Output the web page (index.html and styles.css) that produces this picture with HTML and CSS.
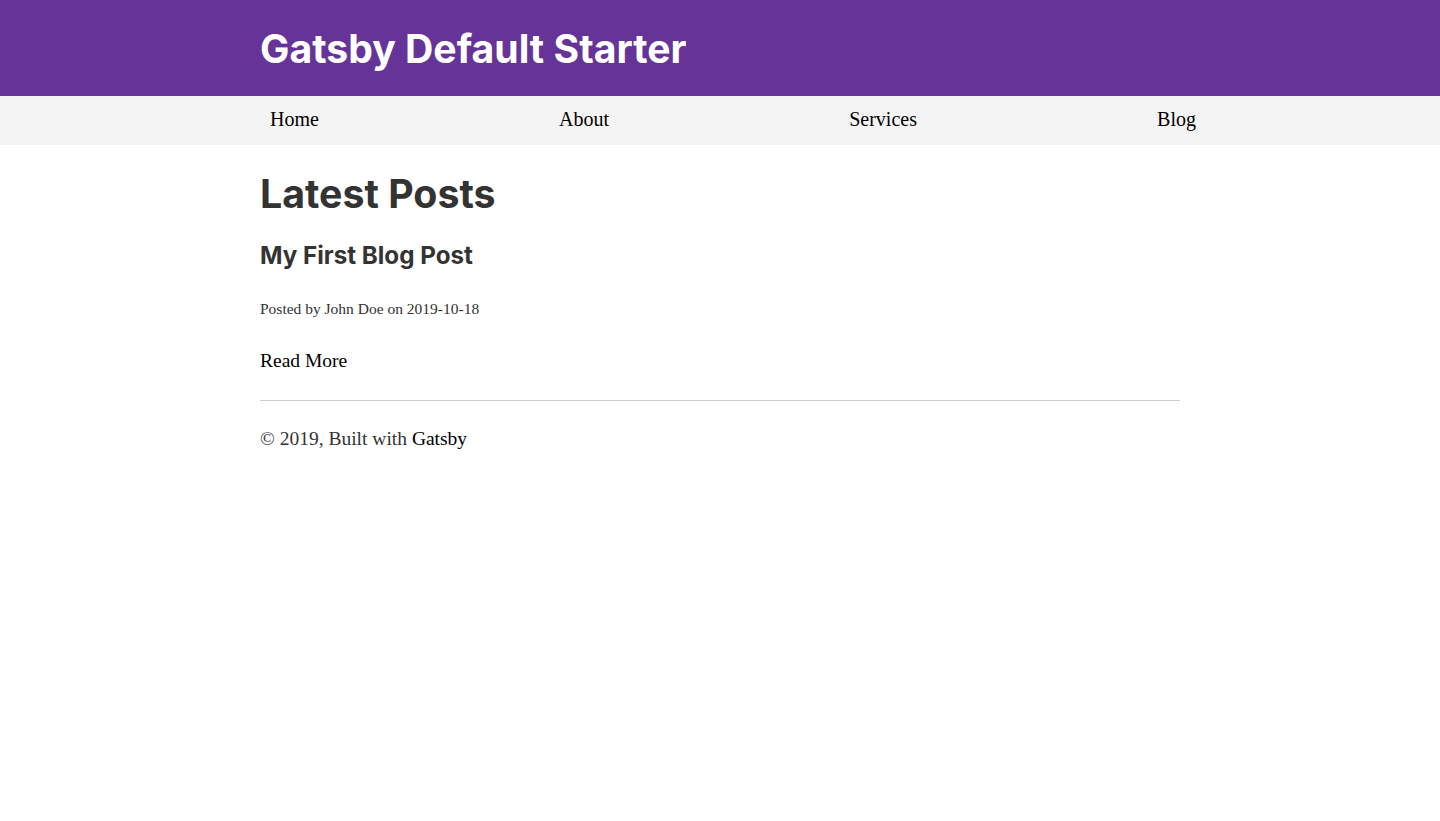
FILE: index.html
```html
<!DOCTYPE html>
<html lang="en">
<head>
<meta charset="utf-8">
<title>Gatsby Default Starter</title>
<link rel="stylesheet" href="styles.css">
</head>
<body>
<header class="site-header">
  <div class="header-inner">
    <h1 class="site-title"><a href="#">Gatsby Default Starter</a></h1>
  </div>
</header>
<nav class="site-nav">
  <ul class="nav-list">
    <li><a href="#">Home</a></li>
    <li><a href="#">About</a></li>
    <li><a href="#">Services</a></li>
    <li><a href="#">Blog</a></li>
  </ul>
</nav>
<main class="content">
  <h1 class="page-title">Latest Posts</h1>
  <article class="post">
    <h3 class="post-title">My First Blog Post</h3>
    <small class="post-meta">Posted by John Doe on 2019-10-18</small>
    <p class="read-more"><a href="#">Read More</a></p>
  </article>
  <hr class="divider">
  <footer class="site-footer">© 2019, Built with <a href="#">Gatsby</a></footer>
</main>
</body>
</html>
```
FILE: styles.css
```css
* { box-sizing: border-box; }
html, body { margin: 0; padding: 0; }
body {
  font-family: "Liberation Serif", serif;
  color: #333;
  background: #fff;
}
a { color: #000; text-decoration: none; }

.site-header { background: #663399; height: 96px; }
.header-inner { max-width: 960px; margin: 0 auto; padding: 0 20px; }
.site-title {
  margin: 0;
  padding-top: 26px;
  font-family: Inter, sans-serif;
  font-weight: 700;
  font-size: 39.2px;
  line-height: 46px;
}
.site-title a { color: #fff; }

.site-nav { background: #f4f4f4; height: 49px; }
.nav-list {
  list-style: none;
  margin: 0 auto;
  max-width: 960px;
  padding: 0 4px 0 30px;
  height: 49px;
  display: flex;
  justify-content: space-between;
  align-items: center;
}
.nav-list a { font-size: 20px; color: #000; position: relative; top: -1px; }

.content { max-width: 960px; margin: 0 auto; padding: 0 20px; }
.page-title {
  font-family: Inter, sans-serif;
  font-weight: 700;
  font-size: 39.3px;
  line-height: 46px;
  margin: 26px 0 0;
}
.post-title {
  font-family: Inter, sans-serif;
  font-weight: 700;
  font-size: 24.2px;
  line-height: 30px;
  margin: 24px 0 0;
}
.post-meta { display: block; font-size: 15.5px; margin-top: 29px; }
.read-more { margin: 30px 0 0; font-size: 19.5px; line-height: 26px; }
.divider { border: 0; border-top: 1px solid #ccc; margin: 26px 0 0; height: 0; }
.site-footer { margin-top: 27px; font-size: 19.5px; color: #333; }
.site-footer a { color: #000; }
```
